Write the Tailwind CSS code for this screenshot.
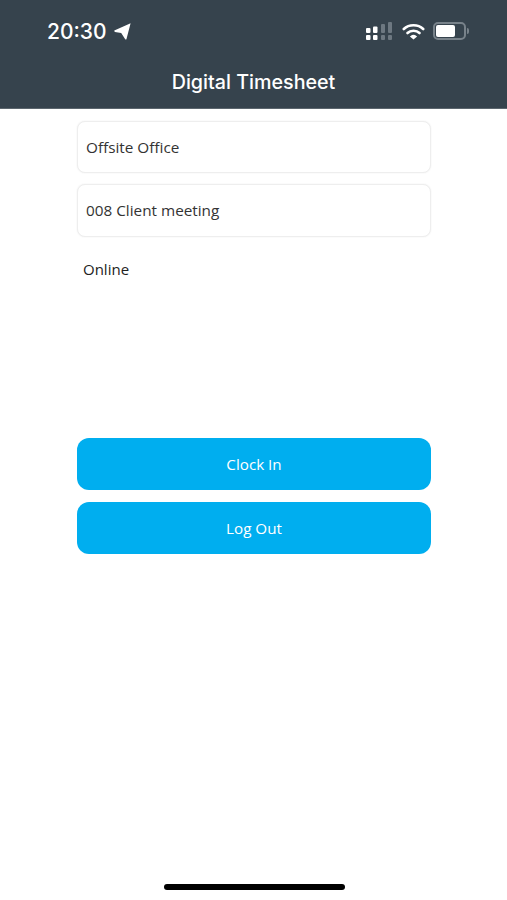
<!DOCTYPE html>
<html lang="en">
<head>
  <meta charset="UTF-8" />
  <meta name="viewport" content="width=device-width, initial-scale=1.0" />
  <title>Digital Timesheet</title>
  <script src="https://cdn.jsdelivr.net/npm/@tailwindcss/browser@4"></script>
</head>
<body class="bg-white h-[900px] overflow-hidden flex flex-col font-['Open_Sans',sans-serif]">

  <!-- header + status bar -->
  <header class="bg-[#36434d] h-[109px] border-b border-[#5c666e] shrink-0 flex flex-col font-['Inter',sans-serif] text-white">
    <div class="h-[62px] flex items-center pl-[47px] pr-[38px] justify-between">
      <div class="flex items-center gap-[7px]">
        <span class="text-[21px] font-medium leading-none">20:30</span>
        <svg width="17" height="17" viewBox="0 0 17 17" fill="white"><path d="M16.6 0.3 L0.3 7.6 Q0 8.6 1 8.9 L7.2 10 L11.2 16.2 Q12 17 12.5 16 Z"/></svg>
      </div>
      <div class="flex items-center gap-[9px]">
        <!-- signal dots -->
        <svg width="27" height="18" viewBox="0 0 27 18">
          <rect x="0" y="6" width="4.5" height="5" rx="1" fill="white"/>
          <rect x="0" y="13" width="4.5" height="5" rx="1" fill="white"/>
          <rect x="7" y="4.5" width="4.5" height="6.5" rx="1" fill="white"/>
          <rect x="7" y="13" width="4.5" height="5" rx="1" fill="white"/>
          <rect x="15" y="2" width="4" height="9" rx="1" fill="#6d7881"/>
          <rect x="15" y="13" width="4" height="5" rx="1" fill="#6d7881"/>
          <rect x="22" y="0" width="4" height="11" rx="1" fill="#6d7881"/>
          <rect x="22" y="13" width="4" height="5" rx="1" fill="#6d7881"/>
        </svg>
        <!-- wifi -->
        <svg width="23" height="17" viewBox="0 0 23 17" fill="none" stroke="white" stroke-width="2.6" stroke-linecap="round">
          <path d="M1.8 6 C7 1 16 1 21.2 6"/>
          <path d="M5.5 10 C8.5 7 14.5 7 17.5 10"/>
          <path d="M9 13.5 C10.4 12.4 12.6 12.4 14 13.5 L11.5 15.5 Z" fill="white" stroke-width="1.4"/>
        </svg>
        <!-- battery -->
        <div class="flex items-center gap-[1px] -ml-[1px]">
          <div class="w-[33px] h-[18px] rounded-[5px] border-2 border-[#78828a] p-[1px]">
            <div class="w-[19px] h-full rounded-[2px] bg-white"></div>
          </div>
          <div class="w-[2px] h-[6px] rounded-r-sm bg-[#78828a]"></div>
        </div>
      </div>
    </div>
    <h1 class="text-center text-[19.7px] font-medium leading-none mt-[11px]">Digital Timesheet</h1>
  </header>

  <main class="w-[354px] ml-[77px] flex flex-col pt-[12px]">
    <div class="h-[52px] flex items-center px-2 rounded-lg bg-white border border-[#eeeeee] shadow-[0_0_2px_#eeeeee] text-[15.3px] text-[#333]">Offsite Office</div>
    <div class="h-[53px] mt-[11px] flex items-center px-2 rounded-lg bg-white border border-[#eeeeee] shadow-[0_0_2px_#eeeeee] text-[15.3px] text-[#333]">008 Client meeting</div>
    <p class="mt-[22px] ml-[6px] text-[15px] leading-[20px] text-[#222]">Online</p>

    <button class="h-[52px] mt-[159px] rounded-xl bg-[#00aeef] text-white text-[15.2px]">Clock In</button>
    <button class="h-[52px] mt-[12px] rounded-xl bg-[#00aeef] text-white text-[15.2px]">Log Out</button>
  </main>

  <div class="mt-auto mb-[10px] ml-[164px] w-[181px] h-[6px] rounded-full bg-black"></div>
</body>
</html>
